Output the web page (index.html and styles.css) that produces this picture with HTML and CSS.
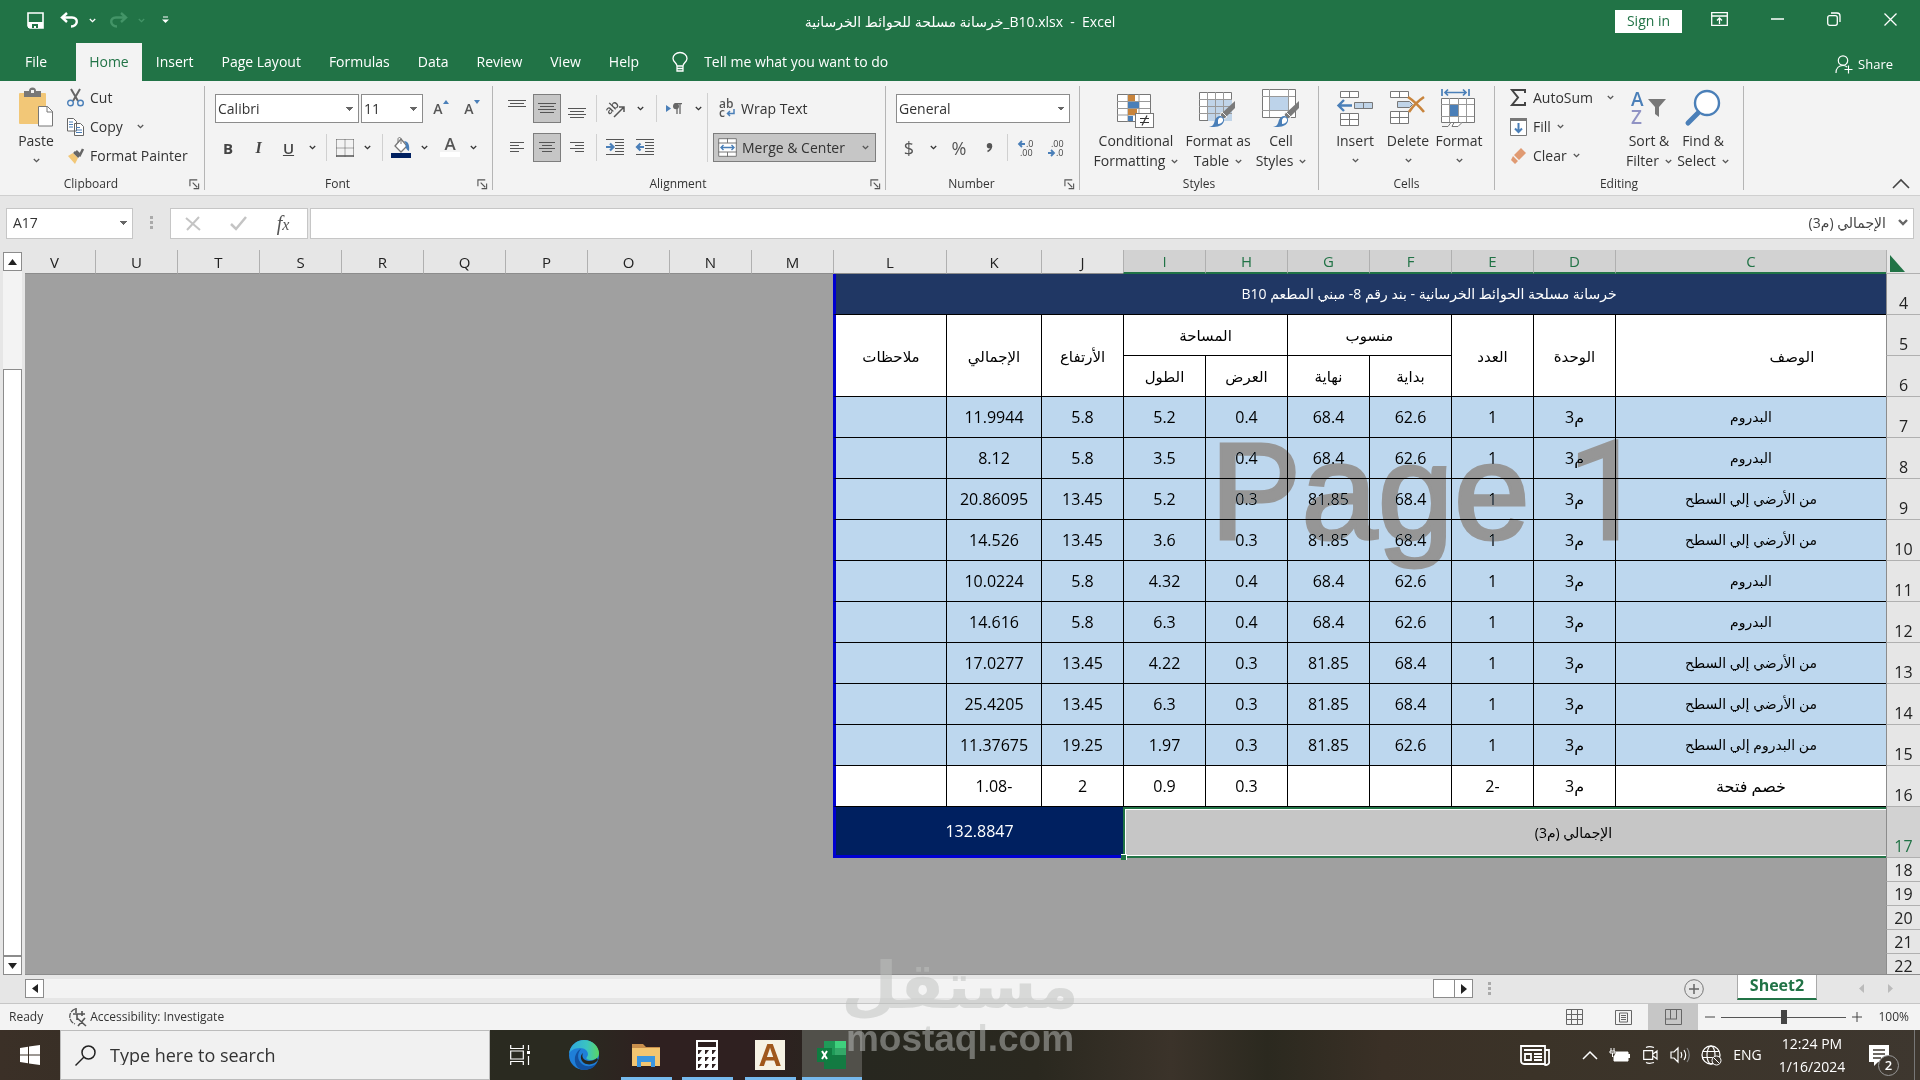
FILE: index.html
```html
<!DOCTYPE html>
<html lang="en">
<head>
<meta charset="utf-8">
<title>خرسانة مسلحة للحوائط الخرسانية_B10.xlsx - Excel</title>
<link rel="stylesheet" href="styles.css">
</head>
<body>
<svg class="defs" aria-hidden="true">
  <symbol id="chev" viewBox="0 0 7 5"><path d="M.8 1l2.7 2.6L6.200 1" fill="none" stroke="currentColor" stroke-width="1.300"/></symbol>
  <symbol id="launch" viewBox="0 0 12 12"><path d="M1 8V1h8M4 4l5 5M10.500 5v5.500H5" fill="none" stroke="#555" stroke-width="1.200"/></symbol>
  <symbol id="brush" viewBox="0 0 28 28"><path d="M27 1v7L18 17l-4-4z" fill="#7a7a7a"/><path d="M14 12l5 5-3 2-4-4z" fill="#7a7a7a" stroke="#f3f3f3"/><path d="M1 27c5-1 5-4 6-7 2-5 8-5 9-1 1 5-5 8-10 8z" fill="#4a7fb8"/><path d="M10 20c1-4 6-3 5 1-1 2-3 3-5 3z" fill="#fff"/></symbol>
</svg>

<header class="titlebar">
  <div class="quick">
    <button aria-label="Save"><svg width="17" height="17" viewBox="0 0 17 17"><path d="M1 1h15v15H3l-2-2z" fill="none" stroke="#fff" stroke-width="1.600"/><path d="M1 10h15v6H1z" fill="#fff"/><path d="M5 12h6v4H9v-2H7v2H5z" fill="#217346"/></svg></button>
    <button aria-label="Undo"><svg width="19" height="16" viewBox="0 0 19 16"><path d="M7 1L2 5.500 7 10M2.500 5.500H12c7 0 6 9-1 9" fill="none" stroke="#fff" stroke-width="2.400"/></svg></button>
    <button aria-label="Undo list"><svg width="7" height="5"><use href="#chev"/></svg></button>
    <button aria-label="Redo" class="faded"><svg width="19" height="16" viewBox="0 0 19 16"><path d="M12 1l5 4.500-5 4.500M16.500 5.500H7c-7 0-6 9 1 9" fill="none" stroke="#439467" stroke-width="2.400"/></svg></button>
    <button aria-label="Redo list" class="faded"><svg width="7" height="5"><use href="#chev"/></svg></button>
    <button aria-label="Customize"><svg width="7" height="8" viewBox="0 0 7 8"><path d="M1 1h5" stroke="#fff"/><path d="M0 3.500h7L3.500 7z" fill="#fff"/></svg></button>
  </div>
  <div class="doc-title">خرسانة مسلحة للحوائط الخرسانية_B10.xlsx &nbsp;-&nbsp; Excel</div>
  <div class="window-controls">
    <button class="signin">Sign in</button>
    <button aria-label="Ribbon display"><svg width="17" height="14" viewBox="0 0 17 14"><path d="M.7.7h15.600v12.600H.7zM1 4h15" fill="none" stroke="#fff" stroke-width="1.300"/><path d="M8.500 12V6M6 8.500L8.500 6 11 8.500" fill="none" stroke="#fff" stroke-width="1.300"/></svg></button>
    <button aria-label="Minimize"><svg width="13" height="2"><path d="M0 1h13" stroke="#fff" stroke-width="1.500"/></svg></button>
    <button aria-label="Restore"><svg width="14" height="14" viewBox="0 0 14 14"><rect x=".7" y="3.700" width="9.600" height="9.600" rx="2" fill="none" stroke="#fff" stroke-width="1.300"/><path d="M4 1h6a3 3 0 0 1 3 3v6" fill="none" stroke="#fff" stroke-width="1.300"/></svg></button>
    <button aria-label="Close"><svg width="13" height="13"><path d="M.5.5l12 12M12.500.5l-12 12" stroke="#fff" stroke-width="1.300"/></svg></button>
  </div>
</header>

<nav class="tabs">
  <a href="#file" class="file">File</a>
  <a href="#home" class="active">Home</a>
  <a href="#insert">Insert</a>
  <a href="#layout">Page Layout</a>
  <a href="#formulas">Formulas</a>
  <a href="#data">Data</a>
  <a href="#review">Review</a>
  <a href="#view">View</a>
  <a href="#help">Help</a>
  <button class="tell"><svg width="16" height="21" viewBox="0 0 16 21"><path d="M5 14c0-3-4-4-4-7.500a7 6 0 0 1 14 0C15 10 11 11 11 14zM5 14v5h6v-5M5 16.500h6" fill="none" stroke="#fff" stroke-width="1.300"/></svg>Tell me what you want to do</button>
  <button class="share"><svg width="18" height="19" viewBox="0 0 18 19"><circle cx="8" cy="5.500" r="4.700" fill="none" stroke="#fff" stroke-width="1.200"/><path d="M1 18c0-5 3-7.500 7-7.500 2 0 3 .5 4 1.500M13.500 10.500v8M9.500 14.500h8" fill="none" stroke="#fff" stroke-width="1.200"/></svg>Share</button>
</nav>

<section class="ribbon">
  <div class="group clipboard">
    <div class="tools">
      <button class="big"><svg width="36" height="40" viewBox="0 0 36 40"><rect x="1" y="5" width="27" height="31" rx="1" fill="#f2c777"/><path d="M6 3h5a3.500 3.500 0 0 1 7 0h5v6H6z" fill="#777"/><rect x="13" y="2" width="3" height="3" fill="#f3f3f3"/><path d="M20.500 18.500h9l5 5V38h-14z" fill="#fff" stroke="#777"/><path d="M29 18v6h6" fill="none" stroke="#777"/></svg><span>Paste</span><svg class="ch" width="7" height="5"><use href="#chev"/></svg></button>
      <div class="stack">
        <button><svg width="17" height="18" viewBox="0 0 17 18"><path d="M4 0l7 12M13 0L6 12" stroke="#666" stroke-width="2"/><circle cx="3.500" cy="14" r="2.800" fill="none" stroke="#4a7fb8" stroke-width="1.400"/><circle cx="13.500" cy="14" r="2.800" fill="none" stroke="#4a7fb8" stroke-width="1.400"/></svg>Cut</button>
        <button><svg width="17" height="18" viewBox="0 0 17 18"><path d="M.5.5h6l3 3V13h-9zM7.500 5.500h6l3 3v9h-9z" fill="#fff" stroke="#666"/><path d="M2 4h4M2 6.500h4M2 9h4M9 9.500h4M9 12h6M9 14.500h6" stroke="#4a7fb8"/></svg>Copy<svg class="ch far" width="7" height="5"><use href="#chev"/></svg></button>
        <button><svg width="17" height="16" viewBox="0 0 17 16"><path d="M1 8l5-3 5 5-3 6z" fill="#f2c777"/><path d="M7 4l5 5M9 3l4 4 3-6" stroke="#666" stroke-width="2.500" fill="none"/></svg>Format Painter</button>
      </div>
    </div>
    <footer>Clipboard<button aria-label="Clipboard options"><svg width="11" height="11"><use href="#launch"/></svg></button></footer>
  </div>

  <div class="group font">
    <div class="tools rows">
      <div class="row r1">
        <select aria-label="Font"><option>Calibri</option></select>
        <select aria-label="Font size"><option>11</option></select>
        <button aria-label="Increase font size" class="glyph">A<svg width="6" height="4"><path d="M0 4l3-4 3 4z" fill="#4a7fb8"/></svg></button>
        <button aria-label="Decrease font size" class="glyph">A<svg width="6" height="4"><path d="M0 0h6L3 4z" fill="#4a7fb8"/></svg></button>
      </div>
      <div class="row r2">
        <button class="fmt"><b>B</b></button><button class="fmt it"><i>I</i></button><button class="fmt"><u>U</u></button>
        <button aria-label="Underline options"><svg width="7" height="5"><use href="#chev"/></svg></button><hr>
        <button aria-label="Borders"><svg width="18" height="18" viewBox="0 0 18 18"><path d="M.5.5h17M.5 9h17M.5.5v17M9 .5v17M17.500.5v17" stroke="#555" stroke-dasharray="1 1" fill="none"/><path d="M0 17h18" stroke="#555" stroke-width="1.500"/></svg></button>
        <button aria-label="Border options"><svg width="7" height="5"><use href="#chev"/></svg></button><hr>
        <button aria-label="Fill color"><svg width="20" height="21" viewBox="0 0 20 21"><path d="M4 9l6-7 6 7-6 6z" fill="#fff" stroke="#777" stroke-width="1.300"/><path d="M7 6V2c0-2 3-2 3 0v5" fill="none" stroke="#777"/><path d="M13 4c4 0 6 4 5 10-3-1-4-5-3-7z" fill="#4a7fb8"/><path d="M0 16h20v5H0z" fill="#002060"/></svg></button>
        <button aria-label="Fill options"><svg width="7" height="5"><use href="#chev"/></svg></button>
        <button aria-label="Font color" class="fontcolor">A</button>
        <button aria-label="Font color options"><svg width="7" height="5"><use href="#chev"/></svg></button>
      </div>
    </div>
    <footer>Font<button aria-label="Font options"><svg width="11" height="11"><use href="#launch"/></svg></button></footer>
  </div>

  <div class="group align">
    <div class="tools">
      <div class="rows">
        <div class="row r1">
          <button aria-label="Top"><svg width="18" height="18" viewBox="0 0 18 18"><path d="M0 .5h18M2 3.500h14M0 6.500h18" stroke="#555"/></svg></button>
          <button aria-label="Middle" class="on"><svg width="18" height="11" viewBox="0 0 18 11"><path d="M0 .5h18M2 3.500h14M0 6.500h18M2 9.500h14" stroke="#555"/></svg></button>
          <button aria-label="Bottom"><svg width="18" height="18" viewBox="0 0 18 18"><path d="M0 8.500h18M2 11.500h14M0 14.500h18M2 17.500h14" stroke="#555"/></svg></button><hr>
          <button aria-label="Orientation"><svg width="19" height="18" viewBox="0 0 19 18"><text x="0" y="11" font-size="12" font-weight="600" fill="#555" transform="rotate(-45 7 9)">ab</text><path d="M8 17L18 7M13 7h5v5" fill="none" stroke="#555" stroke-width="1.500"/></svg></button>
          <button aria-label="Orientation options"><svg width="7" height="5"><use href="#chev"/></svg></button><hr>
          <button aria-label="Text direction"><svg width="16" height="12" viewBox="0 0 16 12"><path d="M0 2l5 3.500L0 9z" fill="#4a7fb8"/><path d="M11 0v11M14 0v11M8.500.7H16" stroke="#666" stroke-width="1.300"/><circle cx="10" cy="3.200" r="3" fill="#666"/></svg></button>
          <button aria-label="Direction options"><svg width="7" height="5"><use href="#chev"/></svg></button>
        </div>
        <div class="row r2">
          <button aria-label="Left"><svg width="14" height="11" viewBox="0 0 14 11"><path d="M0 .5h14M0 3.500h9M0 6.500h14M0 9.500h9" stroke="#555"/></svg></button>
          <button aria-label="Center" class="on"><svg width="16" height="11" viewBox="0 0 16 11"><path d="M0 .5h16M3 3.500h10M0 6.500h16M3 9.500h10" stroke="#555"/></svg></button>
          <button aria-label="Right"><svg width="14" height="11" viewBox="0 0 14 11"><path d="M0 .5h14M5 3.500h9M0 6.500h14M5 9.500h9" stroke="#555"/></svg></button><hr>
          <button aria-label="Indent less"><svg width="18" height="17" viewBox="0 0 18 17"><path d="M0 .5h18M9 3.500h9M9 6.500h9M9 9.500h9M9 12.500h9M0 15.500h18" stroke="#555"/><path d="M0 8h7M4 4.500L7.500 8 4 11.500" fill="none" stroke="#4a7fb8" stroke-width="2.200"/></svg></button>
          <button aria-label="Indent more"><svg width="18" height="17" viewBox="0 0 18 17"><path d="M0 .5h18M9 3.500h9M9 6.500h9M9 9.500h9M9 12.500h9M0 15.500h18" stroke="#555"/><path d="M1 8h7M4.500 4.500L1 8l3.500 3.500" fill="none" stroke="#4a7fb8" stroke-width="2.200"/></svg></button>
        </div>
      </div>
      <hr class="tall">
      <div class="rows">
        <button class="wide"><svg width="18" height="18" viewBox="0 0 18 18"><g font-size="12" font-weight="600" fill="#555"><text x="1" y="8">ab</text><text x="1" y="17">c</text></g><path d="M16 9v4.500h-6M12 11l-2.500 2.500L12 16" fill="none" stroke="#4a7fb8" stroke-width="1.500"/></svg>Wrap Text</button>
        <button class="wide on"><svg width="19" height="19" viewBox="0 0 19 19"><path d="M.7.7h17.600v17.600H.7z" fill="#fff" stroke="#777"/><path d="M0 5h19M0 14h19M9.500 0v5M9.500 14v5" stroke="#777"/><path d="M3 9.500h13M5.500 7L3 9.500 5.500 12M13.500 7L16 9.500 13.500 12" fill="none" stroke="#4a7fb8" stroke-width="1.400"/></svg>Merge &amp; Center<svg class="ch far" width="7" height="5"><use href="#chev"/></svg></button>
      </div>
    </div>
    <footer>Alignment<button aria-label="Alignment options"><svg width="11" height="11"><use href="#launch"/></svg></button></footer>
  </div>

  <div class="group number">
    <div class="tools rows">
      <div class="row r1"><select aria-label="Number format"><option>General</option></select></div>
      <div class="row r2">
        <button class="sym">$</button><button aria-label="Currency options"><svg width="7" height="5"><use href="#chev"/></svg></button>
        <button class="sym">%</button><button aria-label="Comma style"><svg width="7" height="9" viewBox="0 0 7 9"><circle cx="3.500" cy="2.800" r="2.700" fill="#555"/><path d="M5.500 3c0 3-2 4.500-4 5.500" fill="none" stroke="#555" stroke-width="1.500"/></svg></button><hr>
        <button aria-label="Increase decimal"><svg width="17" height="18" viewBox="0 0 17 18"><g font-size="9" fill="#444"><text x="8" y="8">.0</text><text x="2" y="17">.00</text></g><path d="M1 5h6M4 2L1 5l3 3" fill="none" stroke="#4a7fb8" stroke-width="1.800"/></svg></button>
        <button aria-label="Decrease decimal"><svg width="17" height="18" viewBox="0 0 17 18"><g font-size="9" fill="#444"><text x="3" y="8">.00</text><text x="8" y="17">.0</text></g><path d="M0 14h6M3 11l3 3-3 3" fill="none" stroke="#4a7fb8" stroke-width="1.800"/></svg></button>
      </div>
    </div>
    <footer>Number<button aria-label="Number options"><svg width="11" height="11"><use href="#launch"/></svg></button></footer>
  </div>

  <div class="group styles">
    <div class="tools">
      <button class="big"><svg width="38" height="40" viewBox="0 0 38 40"><path d="M.5 6.500h33v27H.5z" fill="#fff" stroke="#777"/><path d="M11 6v28M22 6v28M0 13.500h33M0 20.500h33M0 27h33" stroke="#999"/><path d="M11 7h7v6h-7zM11 21h9v6h-9z" fill="#c8843c"/><path d="M11 14h11v6H11zM11 28h5v5h-5z" fill="#4a7fb8"/><rect x="18.500" y="25.500" width="18" height="14" fill="#fff" stroke="#777"/><path d="M23 30.500h9M23 34.500h9M30 27.500l-5 10" stroke="#333" stroke-width="1.200"/></svg><span>Conditional</span><span>Formatting <svg class="ch" width="7" height="5"><use href="#chev"/></svg></span></button>
      <button class="big"><svg width="38" height="40" viewBox="0 0 38 40"><path d="M.5 4.500h32v28H.5z" fill="#fff" stroke="#777"/><path d="M9 12h24v21H9z" fill="#c0d4e8"/><path d="M8.500 4v28M16.500 4v28M24.500 4v28M0 11.500h33M0 18.500h33M0 25.500h33" stroke="#999"/><use href="#brush" x="9" y="12" width="28" height="28"/></svg><span>Format as</span><span>Table <svg class="ch" width="7" height="5"><use href="#chev"/></svg></span></button>
      <button class="big"><svg width="38" height="40" viewBox="0 0 38 40"><path d="M.5 1.500h33v28H.5z" fill="#fff" stroke="#777"/><path d="M8 9h18v13H8z" fill="#bdd3ea"/><path d="M7.500 1v28M26.500 1v28M0 8.500h33M0 22.500h33" stroke="#999" fill="none"/><use href="#brush" x="10" y="12" width="28" height="28"/></svg><span>Cell</span><span>Styles <svg class="ch" width="7" height="5"><use href="#chev"/></svg></span></button>
    </div>
    <footer>Styles</footer>
  </div>

  <div class="group cells">
    <div class="tools">
      <button class="big"><svg width="36" height="40" viewBox="0 0 36 40"><path d="M3.500 3.500h18v6h-18zM12.500 3.500v6M3.500 25.500h18v12h-18zM12.500 25.500v12M3.500 31.500h18" fill="#fff" stroke="#777"/><path d="M17.500 14.500h18v6h-18zM26.500 14.500v6" fill="#c0d4e8" stroke="#777"/><path d="M1 17.500h14M7 12l-5.500 5.500L7 23" fill="none" stroke="#4a7fb8" stroke-width="2.400"/></svg><span>Insert</span><svg class="ch" width="7" height="5"><use href="#chev"/></svg></button>
      <button class="big"><svg width="36" height="40" viewBox="0 0 36 40"><path d="M.5 3.500h18v6H.5zM9.500 3.500v6M.5 23.500h18v12H.5zM9.500 23.500v12M.5 29.500h18" fill="#fff" stroke="#777"/><path d="M7.500 13.500h12l3 3-3 3h-12z" fill="#c0d4e8" stroke="#777"/><path d="M18 9c6 4 11 9 16 15M34 9c-6 4-11 9-15 15" fill="none" stroke="#c8843c" stroke-width="2.600"/></svg><span>Delete</span><svg class="ch" width="7" height="5"><use href="#chev"/></svg></button>
      <button class="big"><svg width="36" height="40" viewBox="0 0 36 40"><path d="M1 1v7M28 1v7M4 4.500h21M7 1.500L4 4.500l3 3M22 1.500l3 3-3 3" fill="none" stroke="#4a7fb8" stroke-width="1.700"/><path d="M.5 10.500h33v24H.5z" fill="#fff" stroke="#777"/><path d="M8.500 10v24M17.500 10v24M25.500 10v24M0 16.500h33M0 28.500h33" stroke="#999"/><path d="M9 17h8v11H9z" fill="#4a7fb8"/><path d="M1 38.500h6l3-4h3l-2 4h6l4-4" fill="#fff" stroke="#777"/></svg><span>Format</span><svg class="ch" width="7" height="5"><use href="#chev"/></svg></button>
    </div>
    <footer>Cells</footer>
  </div>

  <div class="group editing">
    <div class="tools">
      <div class="stack">
        <button><svg width="17" height="17" viewBox="0 0 17 17"><path d="M15 4V1H2l6 7.500L2 16h13v-3" fill="none" stroke="#444" stroke-width="2"/></svg>AutoSum<svg class="ch far" width="7" height="5"><use href="#chev"/></svg></button>
        <button><svg width="17" height="18" viewBox="0 0 17 18"><path d="M.5.500h16v17H.5z" fill="#fff" stroke="#777"/><path d="M0 1.500h17" stroke="#777" stroke-width="3"/><path d="M8.500 5v9M5 10.500l3.500 3.500 3.500-3.500" fill="none" stroke="#4a7fb8" stroke-width="2"/></svg>Fill<svg class="ch" width="7" height="5"><use href="#chev"/></svg></button>
        <button><svg width="17" height="17" viewBox="0 0 17 17"><path d="M11 1l5 5-7 7-5-5zM3 9l5 5-3 3-4-4z" fill="#e09a72"/></svg>Clear<svg class="ch" width="7" height="5"><use href="#chev"/></svg></button>
      </div>
      <button class="big"><svg width="36" height="40" viewBox="0 0 36 40"><g font-size="19" font-weight="600"><text x="0" y="18" fill="#4a7fb8">A</text><text x="0" y="36" fill="#9093c4">Z</text></g><path d="M17 11h18l-7 8v10l-4-3v-7z" fill="#777"/></svg><span>Sort &amp;</span><span>Filter <svg class="ch" width="7" height="5"><use href="#chev"/></svg></span></button>
      <button class="big"><svg width="36" height="40" viewBox="0 0 36 40"><circle cx="22" cy="15" r="12" fill="#fff" stroke="#4a7fb8" stroke-width="2.400"/><path d="M13 25L3 35" stroke="#4a7fb8" stroke-width="5" stroke-linecap="round"/></svg><span>Find &amp;</span><span>Select <svg class="ch" width="7" height="5"><use href="#chev"/></svg></span></button>
    </div>
    <footer>Editing</footer>
  </div>
  <button class="collapse" aria-label="Collapse ribbon"><svg width="18" height="11"><path d="M1 10l8-8 8 8" fill="none" stroke="#444" stroke-width="1.600"/></svg></button>
</section>

<section class="formula-bar">
  <select aria-label="Name box" class="namebox"><option>A17</option></select>
  <svg width="4" height="14" class="dots"><path d="M0 0h3v3H0zM0 5h3v3H0zM0 10h3v3H0z" fill="#aaa"/></svg>
  <div class="fx">
    <button aria-label="Cancel"><svg width="16" height="14"><path d="M1 1l14 12M14 0L2 13" stroke="#c4c4c4" stroke-width="2"/></svg></button>
    <button aria-label="Enter"><svg width="17" height="15"><path d="M1 8l5 5L16 1" fill="none" stroke="#c4c4c4" stroke-width="2.500"/></svg></button>
    <button aria-label="Insert function"><i>f<small>x</small></i></button>
  </div>
  <div class="formula"><input type="text" dir="rtl" aria-label="Formula" value="الإجمالي (م3)"><button aria-label="Expand"><svg width="10" height="8"><path d="M1 1l4 4 4-4" fill="none" stroke="#666" stroke-width="2.400"/></svg></button></div>
</section>

<main class="workspace">
  <div class="vscroll">
    <button aria-label="Scroll up"><svg width="9" height="6"><path d="M0 6l4.500-6L9 6z" fill="#222"/></svg></button>
    <div class="vtrack"><div class="vthumb"></div></div>
    <button aria-label="Scroll down"><svg width="9" height="6"><path d="M0 0h9L4.500 6z" fill="#222"/></svg></button>
  </div>
  <div class="sheet" dir="rtl">
    <table>
      <colgroup><col class="c-head"><col class="c-desc"><col span="7" class="c-std"><col class="c-total"><col class="c-notes"><col span="10" class="c-std"></colgroup>
      <thead><tr><th class="corner"><svg width="15" height="17"><path d="M0 0v17h15z" fill="#217346"/></svg></th><th class="sel">C</th><th class="sel">D</th><th class="sel">E</th><th class="sel">F</th><th class="sel">G</th><th class="sel">H</th><th class="sel">I</th><th>J</th><th>K</th><th>L</th><th>M</th><th>N</th><th>O</th><th>P</th><th>Q</th><th>R</th><th>S</th><th>T</th><th>U</th><th>V</th></tr></thead>
      <tbody>
        <tr class="banner"><th>4</th><td colspan="10" class="edge bleed">خرسانة مسلحة الحوائط الخرسانية - بند رقم 8- مبني المطعم B10</td></tr>
        <tr class="plain titles"><th>5</th><td rowspan="2" class="bleed-half">الوصف</td><td rowspan="2">الوحدة</td><td rowspan="2">العدد</td><td colspan="2">منسوب</td><td colspan="2">المساحة</td><td rowspan="2">الأرتفاع</td><td rowspan="2">الإجمالي</td><td rowspan="2" class="edge">ملاحظات</td></tr>
        <tr class="plain titles"><th>6</th><td>بداية</td><td>نهاية</td><td>العرض</td><td>الطول</td></tr>
        <tr><th>7</th><td class="desc">البدروم</td><td>م3</td><td>1</td><td>62.6</td><td>68.4</td><td>0.4</td><td>5.2</td><td>5.8</td><td>11.9944</td><td class="edge"></td></tr>
        <tr><th>8</th><td class="desc">البدروم</td><td>م3</td><td>1</td><td>62.6</td><td>68.4</td><td>0.4</td><td>3.5</td><td>5.8</td><td>8.12</td><td class="edge"></td></tr>
        <tr><th>9</th><td class="desc">من الأرضي إلي السطح</td><td>م3</td><td>1</td><td>68.4</td><td>81.85</td><td>0.3</td><td>5.2</td><td>13.45</td><td>20.86095</td><td class="edge"></td></tr>
        <tr><th>10</th><td class="desc">من الأرضي إلي السطح</td><td>م3</td><td>1</td><td>68.4</td><td>81.85</td><td>0.3</td><td>3.6</td><td>13.45</td><td>14.526</td><td class="edge"></td></tr>
        <tr><th>11</th><td class="desc">البدروم</td><td>م3</td><td>1</td><td>62.6</td><td>68.4</td><td>0.4</td><td>4.32</td><td>5.8</td><td>10.0224</td><td class="edge"></td></tr>
        <tr><th>12</th><td class="desc">البدروم</td><td>م3</td><td>1</td><td>62.6</td><td>68.4</td><td>0.4</td><td>6.3</td><td>5.8</td><td>14.616</td><td class="edge"></td></tr>
        <tr><th>13</th><td class="desc">من الأرضي إلي السطح</td><td>م3</td><td>1</td><td>68.4</td><td>81.85</td><td>0.3</td><td>4.22</td><td>13.45</td><td>17.0277</td><td class="edge"></td></tr>
        <tr><th>14</th><td class="desc">من الأرضي إلي السطح</td><td>م3</td><td>1</td><td>68.4</td><td>81.85</td><td>0.3</td><td>6.3</td><td>13.45</td><td>25.4205</td><td class="edge"></td></tr>
        <tr><th>15</th><td class="desc">من البدروم إلي السطح</td><td>م3</td><td>1</td><td>62.6</td><td>81.85</td><td>0.3</td><td>1.97</td><td>19.25</td><td>11.37675</td><td class="edge"></td></tr>
        <tr class="plain"><th>16</th><td>خصم فتحة</td><td>م3</td><td><bdi dir="ltr">2-</bdi></td><td></td><td></td><td>0.3</td><td>0.9</td><td>2</td><td><bdi dir="ltr">1.08-</bdi></td><td class="edge"></td></tr>
        <tr class="sum"><th class="sel">17</th><td colspan="7" class="picked bleed">الإجمالي (م3)<span class="handle"></span></td><td colspan="3" class="edge total">132.8847</td></tr>
        <tr class="empty"><th>18</th></tr><tr class="empty"><th>19</th></tr><tr class="empty"><th>20</th></tr><tr class="empty"><th>21</th></tr><tr class="empty"><th>22</th></tr>
      </tbody>
    </table>
    <div class="page-mark" dir="ltr">Page <span>1</span></div>
  </div>
</main>

<div class="sheetbar">
  <div class="hscroll">
    <button aria-label="Scroll left"><svg width="6" height="9"><path d="M6 0v9L0 4.500z" fill="#222"/></svg></button>
    <div class="htrack"><div class="hthumb"></div></div>
    <button aria-label="Scroll right"><svg width="6" height="10"><path d="M0 0v10L6 5z" fill="#222"/></svg></button>
  </div>
  <svg width="4" height="14" class="dots"><path d="M0 0h3v3H0zM0 5h3v3H0zM0 10h3v3H0z" fill="#aaa"/></svg>
  <div class="sheettabs">
    <button aria-label="New sheet" class="add"><svg width="20" height="20" viewBox="0 0 20 20"><circle cx="10" cy="10" r="9.300" fill="none" stroke="#777"/><path d="M10 5v10M5 10h10" stroke="#666" stroke-width="1.500"/></svg></button>
    <button class="tab">Sheet2</button>
    <button aria-label="Previous sheet" class="nav"><svg width="5" height="9"><path d="M5 0v9L0 4.500z" fill="#bbb"/></svg></button>
    <button aria-label="Next sheet" class="nav"><svg width="5" height="9"><path d="M0 0v9l5-4.500z" fill="#bbb"/></svg></button>
  </div>
</div>

<div class="status">
  <span class="ready">Ready</span>
  <button class="acc"><svg width="19" height="19" viewBox="0 0 19 19"><path d="M7 1a8 8 0 0 0 0 15" fill="none" stroke="#555" stroke-width="1.300" stroke-dasharray="5 1"/><path d="M8 0v5M5 6h12M14 3v5M9 6v6M10 18l7-8M9 10l9 8" stroke="#555" stroke-width="1.600"/></svg>Accessibility: Investigate</button>
  <div class="views">
    <button aria-label="Normal"><svg width="17" height="16"><path d="M.5.5h16v15H.5zM5.500 0v16M11.500 0v16M0 5.500h17M0 10.500h17" fill="none" stroke="#666"/></svg></button>
    <button aria-label="Page layout"><svg width="17" height="15"><path d="M.5.5h16v14H.5zM4.500 3h8v9h-8zM6 5.500h5M6 7.500h5M6 9.500h5" fill="none" stroke="#666"/></svg></button>
    <button aria-label="Page break preview" class="on"><svg width="17" height="16"><path d="M.5.5h16v15H.5zM5.500 0v10M11.500 0v10M0 10h12" fill="none" stroke="#666"/></svg></button>
  </div>
  <div class="zoom">
    <button aria-label="Zoom out"><svg width="10" height="10"><path d="M0 5h10" stroke="#444"/></svg></button>
    <input type="range" min="0" max="100" value="50" aria-label="Zoom">
    <button aria-label="Zoom in"><svg width="10" height="10"><path d="M0 5h10M5 0v10" stroke="#444"/></svg></button>
    <span>100%</span>
  </div>
</div>

<footer class="taskbar">
  <button class="start" aria-label="Start"><svg width="20" height="20" viewBox="0 0 20 20"><path d="M0 3l8-1.200v7.700H0zM9 1.600L20 0v9.500H9zM0 10.500h8v7.700L0 17zM9 10.500h11V20L9 18.400z" fill="#fff"/></svg></button>
  <label class="search"><svg width="21" height="21" viewBox="0 0 21 21"><circle cx="13.500" cy="7.500" r="6.500" fill="none" stroke="#222" stroke-width="1.500"/><path d="M9 12l-8.500 8.500" stroke="#222" stroke-width="1.500"/></svg><input type="text" placeholder="Type here to search" aria-label="Search"></label>
  <div class="apps">
    <button aria-label="Task view"><svg width="21" height="20" viewBox="0 0 21 20"><path d="M.7 0v3.500h12.600V0M.7 20v-3.500h12.600V20M.7 6h12.600v8H.7zM18.500 0v5M18.500 11v9" fill="none" stroke="#fff" stroke-width="1.200"/><path d="M17 6h3v3h-3z" fill="#fff"/></svg></button>
    <button aria-label="Edge"><svg width="30" height="30" viewBox="0 0 30 30"><defs><linearGradient id="eg"><stop offset="0" stop-color="#2ea6e0"/><stop offset=".6" stop-color="#3bc4c0"/><stop offset="1" stop-color="#5ad662"/></linearGradient></defs><circle cx="15" cy="15" r="15" fill="#1f7fd8"/><path d="M0 14C1 5 8 0 15 0c9 0 15 7 15 13 0 5-4 7-8 7-3 0-6-1-4-3 3-4-1-9-7-9C5 8 1 11 0 14z" fill="url(#eg)"/><path d="M12 9c-4 4-4 11 1 15s12 2 15-1c-3 5-8 7-13 7C8 30 5 23 6 17c1-4 3-7 6-8z" fill="#1251a0"/><path d="M14 13c-2 4 1 8 6 8 3 0 6-1 8-3l1 2c-3 4-9 6-14 3-4-3-4-8-1-10z" fill="#27271e"/></svg></button>
    <button aria-label="File Explorer" class="open"><svg width="28" height="24" viewBox="0 0 28 24"><path d="M0 1h11l3 3h14v4H0z" fill="#c98f4c"/><path d="M0 5h28v18H0z" fill="#f3c671"/><path d="M5 24V13h18v11h-4v-5h-10v5z" fill="#3b96e0"/></svg></button>
    <button aria-label="Calculator" class="open"><svg width="22" height="30" viewBox="0 0 22 30"><path d="M0 0h22v30H0z" fill="#fff"/><path d="M2 2h18v5H2zM2 10h4l-3 4H2zM9 10h4l-3 4H9zM16 10h4l-3 4h-1zM2 17h4l-3 4H2zM9 17h4l-3 4H9zM16 17h4l-3 4h-1zM2 24h4l-3 4H2zM9 24h4l-3 4H9zM16 24h4l-3 4h-1z" fill="#2e2020"/></svg></button>
    <button aria-label="AutoCAD" class="open"><span class="cad">A</span></button>
    <button aria-label="Excel" class="open current"><svg width="30" height="28" viewBox="0 0 30 28"><path d="M7 0h22v28H7z" fill="#1f9a58"/><path d="M18 0h11v7H18z" fill="#3fd07d"/><path d="M7 14h22v14H7z" fill="#137a42"/><path d="M18 7h11v7H18z" fill="#34a868"/><path d="M0 7h15v14H0z" fill="#107c41"/><path d="M5 10l5 8M10 10l-5 8" stroke="#fff" stroke-width="2"/></svg></button>
  </div>
  <div class="tray">
    <button aria-label="News"><svg width="30" height="20" viewBox="0 0 30 20"><path d="M1 1h24v18H4a3 3 0 0 1-3-3zM25 5h4v11a3 3 0 0 1-5 3M4 5h18M14 9h8M14 12h8M14 15h8M5 9h6v6H5z" fill="none" stroke="#fff" stroke-width="1.800"/></svg></button>
    <button aria-label="Hidden icons"><svg width="16" height="10"><path d="M1 9l7-7 7 7" fill="none" stroke="#fff" stroke-width="1.500"/></svg></button>
    <button aria-label="Battery"><svg width="20" height="14" viewBox="0 0 20 14"><path d="M6 4h12v9H4V8" fill="#fff" stroke="#fff"/><path d="M19 6v4" stroke="#fff" stroke-width="2"/><path d="M1 0v3M4 0v3M0 3h5v2H0zM2.500 5v4" fill="none" stroke="#fff"/></svg></button>
    <button aria-label="Camera"><svg width="15" height="18" viewBox="0 0 15 18"><path d="M.7 4.700h9v8.600h-9zM10 8l4-3v8l-4-3M3 1.500c2-1 5-1 8 0M3 16.500c2 1 5 1 8 0" fill="none" stroke="#fff" stroke-width="1.200"/></svg></button>
    <button aria-label="Volume"><svg width="20" height="16" viewBox="0 0 20 16"><path d="M1 5h3l4-4v14l-4-4H1zM11 5c1 2 1 4 0 6M14 3c2 3 2 7 0 10" fill="none" stroke="#fff" stroke-width="1.200"/><path d="M17 1c3 4 3 10 0 14" fill="none" stroke="#888" stroke-width="1.200"/></svg></button>
    <button aria-label="Network"><svg width="20" height="20" viewBox="0 0 20 20"><circle cx="10" cy="10" r="9" fill="none" stroke="#fff" stroke-width="1.300"/><ellipse cx="10" cy="10" rx="4" ry="9" fill="none" stroke="#fff" stroke-width="1.200"/><path d="M2 6.500h16M1 12.500h17" stroke="#fff" stroke-width="1.200"/><circle cx="15.500" cy="15.500" r="4.500" fill="#3e372f" stroke="#fff"/><path d="M12.500 12.500l6 6" stroke="#fff"/></svg></button>
    <button class="lang">ENG</button>
    <button class="clock">12:24 PM<br>1/16/2024</button>
    <button aria-label="Notifications" class="notes"><svg width="20" height="21" viewBox="0 0 20 21"><path d="M0 0h20v17H9l-4 4v-4H0z" fill="#fff"/><path d="M4 5h12M4 9h12M4 13h8" stroke="#3e372f" stroke-width="1.300"/></svg><span class="badge">2</span></button>
  </div>
</footer>

<div class="watermark" aria-hidden="true"><span class="wm-ar" dir="rtl">مستقل</span><span class="wm-en">mostaql.com</span></div>
</body>
</html>
```
FILE: styles.css
```css
* { box-sizing: border-box; }
:root {
  --green: #217346;
  --ui: "Open Sans", "Noto Sans", "DejaVu Sans", sans-serif;
}
body {
  margin: 0;
  height: 100vh;
  display: flex;
  flex-direction: column;
  overflow: hidden;
  font: 14px/20px var(--ui);
  color: #333;
  background: #e6e6e6;
}
button, select, input { font: inherit; color: inherit; margin: 0; border-radius: 0; }
button { background: none; border: 0; padding: 0; display: flex; align-items: center; justify-content: center; white-space: nowrap; }
svg { display: block; flex: none; overflow: visible; }
svg text { font-family: var(--ui); }
.defs { position: absolute; width: 0; height: 0; }
.ch { color: #555; }
hr { border: 0; width: 1px; height: 27px; margin: 0 auto; background: #d0d0d0; align-self: center; }

/* Title bar */
.titlebar { flex: none; height: 43px; background: var(--green); color: #fff; display: grid; grid-template-columns: 1fr auto 1fr; align-items: start; }
.quick { display: grid; grid-template-columns: 34px 34px 12px 40px 6px 42px; padding-left: 18px; height: 40px; }
.quick .faded { color: #439467; }
.doc-title { padding-top: 12px; white-space: nowrap; }
.window-controls { display: grid; grid-template-columns: 67px 74px 42px 72px 41px; padding-right: 9px; justify-content: end; height: 38px; align-items: center; }
.window-controls .signin { background: #fff; color: var(--green); height: 23px; margin-top: 4px; }

/* Tabs */
.tabs { flex: none; height: 38px; background: var(--green); color: #fff; display: flex; align-items: stretch; padding-right: 27px; }
.tabs a { color: #fff; text-decoration: none; padding: 9px 14px; }
.tabs .file { padding: 9px 29px 9px 25px; }
.tabs .active { background: #f3f3f3; color: var(--green); padding: 9px 13px; }
.tell { gap: 16px; margin-left: 19px; }
.share { gap: 5px; margin-left: auto; font-size: 13px; padding-top: 4px; }

/* Ribbon */
.ribbon { flex: none; height: 115px; background: #f3f3f3; border-bottom: 1px solid #cfcfcf; display: flex; padding-top: 5px; }
.group { flex: none; height: 104px; border-right: 1px solid #b5b5b5; display: flex; flex-direction: column; }
.group .tools { display: flex; flex: 1; align-items: flex-start; }
.group footer { position: relative; height: 12px; text-align: center; font-size: 12px; line-height: 12px; padding-right: 22px; }
.group footer button { position: absolute; right: 4px; top: 1px; }
.group .tools.rows, .rows { display: flex; flex-direction: column; gap: 10px; padding-top: 8px; }
.group .tools.rows { align-items: stretch; }
.row { display: grid; justify-content: start; height: 29px; }
.row > button { height: 29px; }
.clipboard { width: 205px; }
.font { width: 288px; }
.font .tools { padding-left: 8px; }
.align { width: 393px; }
.align .tools { padding-left: 8px; }
.number { width: 194px; }
.number .tools { padding-left: 9px; }
.styles { width: 239px; }
.cells { width: 176px; }
.editing { width: 249px; }
.styles footer, .cells footer, .editing footer { padding: 0; }

.big { flex-direction: column; justify-content: flex-start; line-height: 20px; color: #333; }
.big > svg:first-child { margin: 2px 0 3px; }
.big span { display: flex; align-items: center; gap: 6px; }
.big > .ch { margin-top: 7px; }
.stack { display: flex; flex-direction: column; align-items: flex-start; margin-top: -3px; }
.stack button { height: 29px; gap: 6px; }
.stack .ch.far { margin-left: 8px; }
.editing .stack { padding-left: 15px; width: 127px; }
.clipboard .big { width: 46px; margin-left: 13px; }
.clipboard .stack { padding-left: 8px; }
.styles .tools { display: grid; grid-template-columns: 92px 72px 54px; padding-left: 10px; }
.cells .tools { display: grid; grid-template-columns: 52px 54px 48px; padding-left: 10px; }
.editing .big { width: 54px; }

select {
  appearance: none;
  height: 29px;
  padding: 0 2px;
  border: 1px solid #8c8c8c;
  outline: 0;
  background-color: #fff;
  background-image: linear-gradient(to bottom left, #666 50%, transparent 50%), linear-gradient(to bottom right, #666 50%, transparent 50%);
  background-size: 4px 4px;
  background-repeat: no-repeat;
  background-position: right 8px center, right 4px center;
}
.font .r1 { grid-template-columns: 144px 62px 32px 26px; gap: 2px; padding-left: 2px; }
.font .r2 { grid-template-columns: 30px 31px 29px 18px 10px 27px 19px 10px 28px 18px 34px 12px; }
.glyph { font-weight: 600; color: #555; }
.glyph svg { align-self: flex-start; margin-top: 6px; }
.fmt { font-size: 15px; color: #444; }
.fmt.it { font: 600 16px "Liberation Serif", serif; }
.fmt u { font-weight: 600; }
.row > .fontcolor { font-size: 17px; font-weight: 600; color: #555; height: 22px; width: 20px; margin: 2px 7px; border-bottom: 5px solid #fff; }
.align .r1 { grid-template-columns: 32px 28px 32px 6px 32px 18px 14px 22px 26px; }
.align .r2 { grid-template-columns: 32px 28px 32px 6px 32px 28px; }
.on { background: #c6c6c6; border: 1px solid #7d7d7d; }
hr.tall { height: 69px; margin: 7px 5px 0 -4px; align-self: flex-start; }
.wide { height: 29px; width: 163px; justify-content: flex-start; padding: 0 4px; gap: 5px; border: 1px solid transparent; color: #333; }
.wide.on { border-color: #7d7d7d; }
.wide .far { margin-left: auto; margin-right: 2px; }
.number .r1 { grid-template-columns: 174px; padding-left: 1px; }
.number .r2 { grid-template-columns: 28px 20px 32px 28px 8px 30px 30px; }
.sym { font-size: 18px; color: #555; }
.collapse { margin: auto 10px 6px auto; }

/* Formula bar */
.formula-bar { flex: none; display: flex; align-items: center; height: 54px; padding: 0 6px; }
.namebox { width: 127px; height: 31px; border-color: #c6c6c6; padding: 0 6px; }
.dots { margin: 0 16px 0 17px; }
.fx { width: 138px; height: 31px; display: grid; grid-template-columns: 44px 46px 44px; background: #fff; border: 1px solid #c6c6c6; }
.fx i { font: italic 20px/28px "Liberation Serif", serif; color: #555; }
.fx small { font-size: 16px; }
.formula { flex: 1; height: 31px; margin-left: 2px; display: flex; background: #fff; border: 1px solid #c6c6c6; }
.formula input { flex: 1; min-width: 0; border: 0; background: none; outline: 0; color: #444; padding: 0; }
.formula button { width: 27px; padding-left: 6px; }

/* Worksheet */
.workspace { flex: 1; min-height: 0; display: flex; }
.vscroll { flex: none; width: 19px; margin: 2px 3px 0 3px; display: flex; flex-direction: column; }
.vscroll button, .hscroll button { flex: none; width: 19px; height: 19px; background: #fff; border: 1px solid #8c8c8c; }
.vtrack { flex: 1; background: #f3f3f3; display: flex; flex-direction: column; padding-top: 98px; }
.vthumb { flex: 1; background: #fff; border: 1px solid #8c8c8c; }
.sheet { position: relative; flex: 1; min-width: 0; overflow: hidden; background: linear-gradient(#e6e6e6 23px, #8c8c8c 23px, #8c8c8c 24px, #a0a0a0 24px); border-bottom: 1px solid #8c8c8c; }
table { table-layout: fixed; width: 1907px; border-spacing: 0; font-size: 16px; line-height: 20px; color: #000; }
.c-head { width: 34px; }
.c-desc { width: 271px; }
.c-std { width: 82px; }
.c-total { width: 95px; }
.c-notes { width: 113px; }
th, td { padding: 0; text-align: center; vertical-align: middle; overflow: hidden; white-space: nowrap; }
th { font-weight: 400; font-size: 15px; color: #222; background: #e6e6e6; }
thead th { height: 24px; border-left: 1px solid #b0b0b0; border-bottom: 1px solid #8c8c8c; }
thead .sel { background: #d2d2d2; color: var(--green); border-bottom: 2px solid var(--green); }
thead .corner { border-bottom-color: #b0b0b0; }
.corner svg { margin: 3px auto 0 3px; margin-inline: auto 3px; }
tbody th { height: 41px; padding-bottom: 1px; vertical-align: bottom; border-bottom: 1px solid #b0b0b0; border-left: 1px solid #8c8c8c; font-size: 16px; }
tbody .sel { background: #d2d2d2; color: var(--green); }
td { background: #bdd7ee; border-left: 1px solid #000; border-bottom: 1px solid #000; }
.plain td { background: #fff; }
.titles td { font-size: 15px; }
td.desc, td.bleed { font-size: 14px; }
td.edge { border-left: 3px solid #0000d0; }
.banner td { background: #203764; color: #fff; }
.sum th { height: 51px; }
.sum .picked { position: relative; overflow: visible; background: #c6c6c6; border: solid var(--green); border-width: 2px 0 2px 2px; box-shadow: inset 1px 1px #fff, inset 0 -1px #fff; }
.handle { position: absolute; left: -4px; bottom: -4px; width: 6px; height: 6px; background: var(--green); border: solid #fff; border-width: 1px 1px 0 0; }
.sum .total { background: #002060; color: #fff; border-bottom: 3px solid #0000d0; }
td.bleed { padding-left: 136px; }
td.bleed-half { padding-left: 82px; }
.empty th { height: 24px; }
.page-mark { position: absolute; right: 275px; top: 162px; font: 137px/160px "Liberation Sans", Arial, sans-serif; color: #969696; -webkit-text-stroke: 3px #969696; mix-blend-mode: darken; pointer-events: none; }
.page-mark span { font-family: Roboto, sans-serif; }

/* Sheet tabs and horizontal scrolling */
.sheetbar { flex: none; height: 28px; display: flex; padding: 4px 0 5px 25px; }
.hscroll { flex: 1; display: flex; }
.htrack { flex: 1; background: #f3f3f3; }
.hthumb { margin-left: auto; width: 21px; height: 19px; background: #fff; border: 1px solid #8c8c8c; border-right: 0; }
.sheetbar .dots { margin: 3px 0 0 15px; }
.sheettabs { width: 428px; display: flex; align-items: center; justify-content: flex-end; padding-right: 27px; }
.sheettabs .tab { width: 80px; height: 27px; margin: -5px 42px 0 33px; background: #fff; color: var(--green); font-size: 16px; font-weight: 700; border: 1px solid #aaa; border-top: 0; border-bottom: 2px solid var(--green); }
.sheettabs .nav + .nav { margin-left: 24px; }

/* Status bar */
.status { flex: none; height: 27px; background: #f3f3f3; border-top: 1px solid #c6c6c6; display: flex; align-items: center; font-size: 12px; }
.ready { padding-left: 9px; }
.acc { margin-left: 25px; gap: 3px; }
.views { margin-left: auto; height: 26px; display: grid; grid-template-columns: 50px 49px 50px; }
.views button { height: 26px; }
.views .on { border: 0; }
.zoom { display: flex; align-items: center; padding: 0 11px 0 7px; }
.zoom input { appearance: none; width: 125px; height: 15px; margin: 0 6px; background: linear-gradient(#555, #555) center / 100% 1px no-repeat; }
.zoom input::-webkit-slider-thumb { appearance: none; width: 6px; height: 14px; background: #444; }
.zoom span { padding-left: 16px; }

/* Taskbar */
.taskbar { flex: none; height: 50px; display: flex; color: #fff; background: linear-gradient(90deg, #3b3027, #2a2a20 26%, #2a2a20 30%, #2f2020 34%, #2f2020 39%, #27271f 45%, #2a281f 54%, #3b332a 61%, #2b291f 66%, #3a3026 72%, #3b3328 80%, #3e372f); }
.start { width: 60px; }
.search { width: 430px; background: #f1f1f1; border: 1px solid #bcbcbc; display: flex; align-items: center; gap: 14px; padding: 0 14px; color: #333; }
.search input { flex: 1; min-width: 0; border: 0; background: none; outline: 0; font-size: 18px; padding: 0; }
.search input::placeholder { color: #333; opacity: 1; }
.apps { display: grid; grid-template-columns: 60px 67px 58px 64px 62px 62px; }
.apps button { height: 50px; }
.apps .open { background: linear-gradient(#76b9ed, #76b9ed) center bottom / 51px 3px no-repeat; }
.apps .current { background: linear-gradient(#76b9ed, #76b9ed) center bottom / 60px 3px no-repeat, #51504a; margin: 0 1px; }
.cad { width: 30px; height: 30px; background: #f6f2e4; color: #a0581c; font: 700 32px/30px "Liberation Sans", Arial, sans-serif; }
.tray { margin-left: auto; display: grid; grid-template-columns: 80px 30px 30px 30px 29px 34px 39px 90px 58px; padding-right: 5px; }
.lang { font-size: 14px; }
.clock { font-size: 14px; line-height: 23px; text-align: center; }
.notes { position: relative; border-right: 1px solid #777; padding-right: 14px; }
.badge { position: absolute; right: 15px; bottom: 4px; width: 21px; height: 21px; border: 1px solid #999; border-radius: 50%; background: #3e372f; font-size: 13px; font-weight: 600; line-height: 19px; }

.watermark { position: fixed; left: 50%; bottom: 21px; transform: translateX(-50%); display: flex; flex-direction: column; align-items: center; color: #bec0be; opacity: .5; pointer-events: none; white-space: nowrap; }
.wm-ar { font: 700 65px/66px "DejaVu Sans", sans-serif; }
.wm-en { font: 700 37px/40px "Liberation Sans", Arial, sans-serif; }
```
